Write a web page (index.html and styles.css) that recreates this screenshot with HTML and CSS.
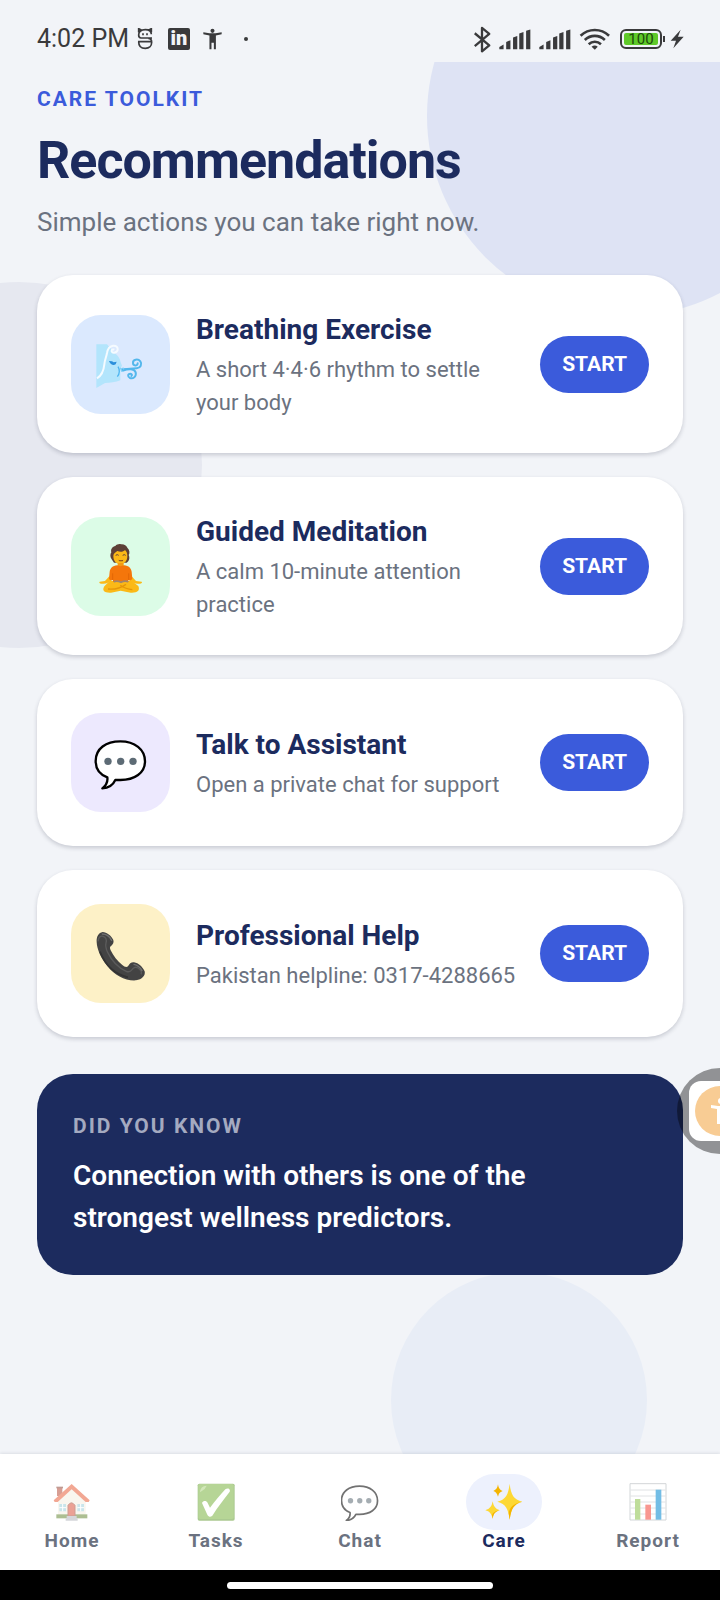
FILE: index.html
```html
<!DOCTYPE html>
<html lang="en">

<head>
    <meta charset="UTF-8">
    <meta name="viewport" content="width=device-width, initial-scale=1.0">
    <title>Recommendations</title>
    <link rel="stylesheet" href="styles.css">
</head>

<body>
    <!-- shared by the assistant card and the chat tab -->
    <svg class="sprite" aria-hidden="true">
        <symbol id="bubble" viewBox="104 112 156 156" overflow="visible">
            <path d="M180 125c43 0 74 24 74 60 0 35-31 56-74 56h-15c-7 15-19 24-39 25 12-9 17-19 15-33-22-8-35-25-35-49 0-37 31-59 74-59z" fill="#fff" stroke="#000" stroke-width="7" stroke-linejoin="round" />
            <g fill="#5d6b75">
                <circle cx="143" cy="185" r="11" />
                <circle cx="181" cy="185" r="11" />
                <circle cx="218" cy="185" r="11" />
            </g>
        </symbol>
    </svg>

    <div class="status">
        <span class="time">4:02 PM</span>
        <svg class="ic-s" viewBox="412 82 48 66" fill="none" stroke="#3a3a3c" stroke-width="5">
            <path d="M457 112H424c-5 0-7-4-7-9 0-11 8-16 20-16s18 5 18 14M415 123h40M417 123c0 13 8 20 20 20s19-8 19-18c0-8-4-12-10-12M417 95V84l8 4M455 95V84l-8 4" />
            <path d="M430 98v6M442 98v6" />
        </svg>
        <span class="linkedin">in</span>
        <svg class="ic-man" viewBox="608 82 56 64" fill="#3a3a3c">
            <circle cx="636" cy="90" r="6" />
            <path d="M609 94l18 3h18l18-3v6l-17 4v40h-6v-19h-7v19h-6v-40l-18-4z" />
        </svg>
        <span class="dot"></span>

        <div class="status-right">
            <svg class="ic-bt" viewBox="336 72 54 82" fill="none" stroke="#3a3a3c" stroke-width="7">
                <path d="M341 94l44 37-22 18V78l22 18-44 37" stroke-linejoin="round" />
            </svg>
            <svg class="ic-signal" viewBox="416 84 98 64" fill="#3a3a3c">
                <path d="M417 146v-7l13-8v15zM438 146v-22l13-6v28zM459 146v-36l13-5v41zM478 146V98l13-5v53zM499 146V89l13-4v61z" />
            </svg>
            <svg class="ic-signal" viewBox="416 84 98 64" fill="#3a3a3c">
                <path d="M417 146v-7l13-8v15zM438 146v-22l13-6v28zM459 146v-36l13-5v41zM478 146V98l13-5v53zM499 146V89l13-4v61z" />
            </svg>
            <svg class="ic-wifi" viewBox="656 80 94 68" fill="none" stroke="#3a3a3c" stroke-width="8">
                <path d="M660 104c25-24 63-24 88 0M673 117c18-17 44-17 62 0M685 130c11-10 27-10 38 0" />
                <path d="M694 138c6-5 13-5 19 0l-9 9z" fill="#3a3a3c" stroke="none" />
            </svg>
            <span class="battery"><span>100</span></span>
            <svg class="ic-bolt" viewBox="930 84 42 60" fill="#3a3a3c">
                <path d="M962 86l-30 33h16l-8 23 31-35h-17z" />
            </svg>
        </div>
    </div>

    <main>
        <div class="blob blob-top"></div>
        <div class="blob blob-left"></div>
        <div class="blob blob-bottom"></div>

        <header>
            <p class="eyebrow">CARE TOOLKIT</p>
            <h1>Recommendations</h1>
            <p class="subtitle">Simple actions you can take right now.</p>
        </header>

        <section class="cards">
            <article class="card">
                <div class="tile blue">
                    <svg viewBox="104 115 156 156" fill="none" aria-hidden="true">
                        <path d="M108 134h32l22 26c12 8 17 17 19 28l4 10-5 8v36c-14 7-31 7-46 8l-26 15z" fill="#b3e5fc" />
                        <path d="M110 236c15-9 20-22 22-42 1-13 6-22 8-34 2-14 8-20 18-22 10-1 15 5 14 12-1 9-15 12-18 5-1-5 3-7 8-5" stroke="#f5fbff" stroke-width="6" />
                        <path d="M146 184c4 11 13 14 20 10l3-8-9 2-5-3z" fill="#2b8fdb" />
                        <path d="M173 201c6 9 5 22-2 30" stroke="#4fb6f0" stroke-width="4" />
                        <path d="M185 209c18-1 30-2 44-3 12-1 17-13 11-21-7-9-23-6-22 5 0 9 14 10 14 1M188 213c18-7 34-6 38 5 3 13-8 20-17 17-8-3-7-13 1-13 5 0 6 5 3 7" stroke="#53b7ec" stroke-width="6" stroke-linecap="round" />
                        <path d="M180 204l5 12M187 204l4 5" stroke="#7fd0f8" stroke-width="4" />
                    </svg>
                </div>
                <div class="info">
                    <h2>Breathing Exercise</h2>
                    <p>A short 4·4·6 rhythm to settle your body</p>
                </div>
                <button type="button">START</button>
            </article>

            <article class="card">
                <div class="tile green">
                    <svg viewBox="104 117 156 156" aria-hidden="true">
                        <path d="M154 175c-5-7-5-15-1-21-3-9 4-18 12-19 4-5 12-7 17-5 9-1 16 3 19 10 7 6 8 16 4 22 4 8 2 19-6 23h-38z" fill="#5d4037" />
                        <path d="M159 165c0-8 7-11 12-15 8 4 18 3 23-3 5 5 7 10 7 18 0 16-9 24-21 24s-21-8-21-24z" fill="#fbb917" />
                        <path d="M166 163q5-4 9 0M187 163q5-4 9 0" fill="none" stroke="#5d4037" stroke-width="3" />
                        <path d="M174 176q8 4 15 0l-2 5h-10z" fill="#7a3c20" />
                        <path d="M172 186h18v12h-18z" fill="#f39a13" />
                        <path d="M147 226l-13 14-16 2c-4 5 5 7 11 6 11 0 20-5 30-15zM214 226l13 14 17 2c4 5-6 7-12 6-11 0-20-5-30-15z" fill="#fbb917" />
                        <path d="M148 240h66l20 15c6 15-4 21-23 20l-30-6-29 6c-20 1-28-6-20-19z" fill="#fbb917" />
                        <path d="M143 264c18 2 35-1 54-14M216 266c-15-1-25-5-36-13" fill="none" stroke="#e59608" stroke-width="4" />
                        <path d="M171 193q10 5 20 0c15 2 21 8 23 19l2 22c-4 5-9 5-12 2v7h-46v-7c-4 3-8 2-12-2l2-22c2-11 8-17 23-19z" fill="#f4760b" />
                        <path d="M157 217v20M205 217v20" stroke="#d95f05" stroke-width="2" />
                        <path d="M160 242q11-4 22 2 10-6 22-2" fill="none" stroke="#a0846e" stroke-width="5" />
                    </svg>
                </div>
                <div class="info">
                    <h2>Guided Meditation</h2>
                    <p>A calm 10-minute attention practice</p>
                </div>
                <button type="button">START</button>
            </article>

            <article class="card">
                <div class="tile purple">
                    <svg aria-hidden="true"><use href="#bubble" /></svg>
                </div>
                <div class="info">
                    <h2>Talk to Assistant</h2>
                    <p>Open a private chat for support</p>
                </div>
                <button type="button">START</button>
            </article>

            <article class="card">
                <div class="tile yellow">
                    <svg viewBox="104 680 156 156" fill="none" aria-hidden="true">
                        <path d="M109 722c-1-17 6-28 18-30 12 0 26 11 32 24 2 7-1 13-6 17-5 3-5 7-2 14 8 17 20 32 35 44 6 5 12 8 17 4 4-8 10-13 18-12 14 2 25 13 32 27 3 13-8 25-26 27-32 2-64-14-86-43-19-24-31-49-32-72z" fill="#434343" />
                        <path d="M113 720c2-12 7-17 15-15 10 3 12 9 9 20-2 8 0 18 5 28 12 25 29 45 56 57 7 3 12 2 17-5 5-8 12-9 18-5 9 6 12 13 9 19" stroke="#5b5b5b" stroke-width="4" />
                        <path d="M126 698c12 0 22 8 28 19M221 789c12 3 19 9 24 19" stroke="#707070" stroke-width="4" stroke-linecap="round" />
                        <path d="M119 751c16 40 43 68 84 77" stroke="#333" stroke-width="5" />
                    </svg>
                </div>
                <div class="info">
                    <h2>Professional Help</h2>
                    <p>Pakistan helpline: 0317-4288665</p>
                </div>
                <button type="button">START</button>
            </article>
        </section>

        <section class="fact">
            <p class="fact-label">DID YOU KNOW</p>
            <p class="fact-text">Connection with others is one of the strongest wellness predictors.</p>
        </section>
    </main>

    <nav>
        <a href="#home">
            <span class="pill">
                <svg viewBox="158 129 114 114" aria-hidden="true">
                    <path d="M170 142h16v26h-16z" fill="#b8503c" />
                    <path d="M168 140h20v5h-20z" fill="#8d4a3c" />
                    <path d="M173 178l41-36 42 36v49h-83z" fill="#f5efe3" />
                    <path d="M168 223h93v12h-93z" fill="#6a8a3a" />
                    <path d="M214 132l54 49-3 5h-9l-42-38-42 38h-9l-3-5z" fill="#e8603c" />
                    <path d="M177 192h20v22h-20zM231 192h20v22h-20z" fill="#9ed0dc" />
                    <path d="M187 192v22M177 203h20M241 192v22M231 203h20" stroke="#fff" stroke-width="3" />
                    <path d="M203 228v-32q10-15 21 0v32z" fill="#dc5540" stroke="#a3503d" stroke-width="3" />
                    <path d="M199 228h30v7h-30zM196 235h36v7h-36z" fill="#b4b6bd" />
                </svg>
            </span>
            Home
        </a>
        <a href="#tasks">
            <span class="pill">
                <svg viewBox="589 129 114 114" aria-hidden="true">
                    <rect x="591" y="131" width="111" height="111" rx="5" fill="#689f38" />
                    <rect x="593" y="132" width="106" height="105" rx="5" fill="#7cb342" />
                    <path d="M598 157q1-19 20-20l-6 10z" fill="#aed581" />
                    <path d="M604 189c4-8 13-8 17 0l7 14c15-20 31-39 46-55 8-7 18 0 12 9-18 23-35 45-50 69-5 7-12 5-16-2z" fill="#fff" />
                </svg>
            </span>
            Tasks
        </a>
        <a href="#chat">
            <span class="pill">
                <svg aria-hidden="true"><use href="#bubble" /></svg>
            </span>
            Chat
        </a>
        <a href="#care" class="active">
            <span class="pill">
                <svg viewBox="374 129 114 114" aria-hidden="true">
                    <path d="M448 131c4 35 12 46 38 54-27 8-33 20-38 54-5-35-11-46-37-54 27-8 32-20 37-54z" fill="#fdd835" />
                    <path d="M486 185c-27 8-33 20-38 54l-3-20c3-16 13-29 41-34z" fill="#f4b400" />
                    <path d="M397 184c3 16 8 22 21 27-14 4-18 10-21 25-4-16-9-21-22-25 14-5 19-11 22-27z" fill="#fdd835" />
                    <path d="M418 211c-14 4-18 10-21 25l-2-10c2-7 9-13 23-15z" fill="#f4b400" />
                    <path d="M413 133c2 12 5 16 14 20-9 3-12 8-14 17-3-10-6-14-14-17 9-4 12-9 14-20z" fill="#f4b400" />
                </svg>
            </span>
            Care
        </a>
        <a href="#report">
            <span class="pill">
                <svg viewBox="806 129 114 114" aria-hidden="true">
                    <path d="M809 131h108v109H809z" fill="#fff" stroke="#b0b6ba" stroke-width="3" />
                    <path d="M810 150h106M810 168h106M810 186h106M810 204h106M810 222h106" stroke="#c8ccd0" stroke-width="3" />
                    <path d="M824 177h16v62h-16z" fill="#8bc34a" />
                    <path d="M855 194h17v45h-17z" fill="#f44336" />
                    <path d="M886 149h17v90h-17z" fill="#0288d1" />
                </svg>
            </span>
            Report
        </a>
    </nav>

    <div class="gesture-bar"><span></span></div>

    <button type="button" class="floating" aria-label="Accessibility">
        <span>
            <svg viewBox="0 0 50 50" aria-hidden="true">
                <circle cx="25" cy="25" r="25" fill="#f8cc94" />
                <g fill="#fff">
                    <circle cx="26" cy="15" r="3" />
                    <path d="M16 19l7 1h6l7-1v3l-7 1v15h-2v-8h-2v8h-3V23l-6-1z" />
                </g>
            </svg>
        </span>
    </button>
</body>

</html>
```

FILE: styles.css
```css
* {
    margin: 0;
    padding: 0;
    box-sizing: border-box;
    font-family: Roboto, "Liberation Sans", sans-serif;
}

body {
    min-height: 100vh;
    display: flex;
    flex-direction: column;
    background-color: #f2f4f8;
    overflow-x: hidden;
}

svg {
    display: block;
    flex: none;
}

.sprite {
    position: absolute;
    width: 0;
    height: 0;
}

/* status bar */
.status {
    height: 62px;
    padding: 16px 36px 0 37px;
    display: flex;
    align-items: center;
    color: #3a3a3c;
}

.time {
    font-size: 25px;
    line-height: 30px;
    margin-right: 8px;
}

.ic-s {
    width: 16px;
    height: 22px;
    margin-right: 15px;
}

.linkedin {
    width: 22px;
    height: 22px;
    border-radius: 2px;
    background-color: #3a3a3c;
    color: #f2f4f8;
    font-size: 20px;
    font-weight: 900;
    line-height: 21px;
    text-align: center;
}

.ic-man {
    width: 19px;
    height: 22px;
    margin-left: 13px;
}

.dot {
    width: 4px;
    height: 4px;
    margin-left: 22px;
    border-radius: 50%;
    background-color: #3a3a3c;
}

.status-right {
    margin-left: auto;
    display: flex;
    align-items: center;
    gap: 8px;
}

.ic-bt {
    width: 18px;
    height: 27px;
}

.ic-signal {
    width: 32px;
    height: 21px;
}

.ic-wifi {
    width: 31px;
    height: 22px;
}

.battery {
    position: relative;
    width: 42px;
    height: 20px;
    margin-left: 2px;
    padding: 2px;
    border: 2px solid #3a3a3c;
    border-radius: 6px;
}

.battery span {
    display: block;
    height: 12px;
    border-radius: 2px;
    background-color: #5fc929;
    color: #1d4a0c;
    font-size: 15px;
    line-height: 12px;
    text-align: center;
}

.battery::after {
    content: "";
    position: absolute;
    top: 5px;
    right: -5px;
    width: 2px;
    height: 6px;
    background-color: #3a3a3c;
}

.ic-bolt {
    width: 14px;
    height: 20px;
}

/* page */
main {
    position: relative;
    flex: 1;
    padding: 23px 37px;
    overflow: hidden;
}

header,
.cards,
.fact {
    position: relative;
}

.blob {
    position: absolute;
    border-radius: 50%;
}

.blob-top {
    width: 400px;
    height: 400px;
    top: -146px;
    right: -107px;
    background-color: #dee3f4;
}

.blob-left {
    width: 366px;
    height: 366px;
    top: 220px;
    left: -164px;
    background-color: #e6e8f0;
}

.blob-bottom {
    width: 256px;
    height: 256px;
    right: 73px;
    bottom: -74px;
    background-color: #e8edf6;
}

.eyebrow {
    color: #3b5bdb;
    font-size: 21px;
    font-weight: 700;
    line-height: 28px;
    letter-spacing: 2px;
}

h1 {
    margin-top: 16px;
    color: #1c2b5e;
    font-size: 52px;
    font-weight: 700;
    line-height: 64px;
    letter-spacing: -1px;
}

.subtitle {
    margin: 11px 0 35px;
    color: #6b7280;
    font-size: 26px;
    line-height: 36px;
}

.cards {
    display: flex;
    flex-direction: column;
    gap: 24px;
}

.card {
    display: flex;
    align-items: center;
    padding: 34px;
    border-radius: 36px;
    background-color: #fff;
    box-shadow: 0 2px 4px rgba(28, 35, 60, 0.2);
}

.tile {
    flex: none;
    width: 99px;
    height: 99px;
    margin-right: 26px;
    border-radius: 30px;
    display: flex;
    justify-content: center;
    align-items: center;
}

.tile svg {
    width: 52px;
    height: 52px;
    overflow: visible;
}

.blue {
    background-color: #dbe9fe;
}

.green {
    background-color: #dcfce7;
}

.purple {
    background-color: #ede9fe;
}

.yellow {
    background-color: #fdf1c7;
}

.info {
    flex: 1;
    min-width: 0;
    margin-right: 20px;
}

h2 {
    margin-bottom: 2px;
    color: #1c2b5e;
    font-size: 28px;
    font-weight: 700;
    line-height: 42px;
}

.info p {
    color: #6b7280;
    font-size: 22px;
    line-height: 33px;
}

.card button {
    flex: none;
    padding: 14px 22px;
    border: none;
    border-radius: 29px;
    background-color: #3b5bdb;
    color: #fff;
    font-size: 21px;
    font-weight: 700;
    line-height: 29px;
}

.fact {
    margin-top: 37px;
    padding: 36px;
    border-radius: 36px;
    background-color: #1c2b5e;
}

.fact-label {
    margin-bottom: 13px;
    color: #a4aac0;
    font-size: 21px;
    font-weight: 700;
    line-height: 32px;
    letter-spacing: 2px;
}

.fact-text {
    max-width: 500px;
    color: #fff;
    font-size: 28px;
    font-weight: 600;
    line-height: 42px;
}

/* bottom tabs */
nav {
    position: relative;
    display: flex;
    padding: 20px 0 18px;
    background-color: #fff;
    box-shadow: 0 -1px 3px rgba(28, 35, 60, 0.1);
}

nav a {
    flex: 1;
    display: flex;
    flex-direction: column;
    align-items: center;
    color: #6b7280;
    font-size: 19px;
    font-weight: 700;
    line-height: 22px;
    letter-spacing: 1px;
    text-decoration: none;
}

.pill {
    width: 76px;
    height: 56px;
    border-radius: 28px;
    display: flex;
    justify-content: center;
    align-items: center;
}

.pill svg {
    width: 38px;
    height: 38px;
    opacity: 0.55;
}

.active {
    color: #1c2b5e;
}

.active .pill {
    background-color: #edf1fd;
}

.active .pill svg {
    opacity: 1;
}

.gesture-bar {
    height: 30px;
    display: flex;
    justify-content: center;
    align-items: center;
    background-color: #000;
}

.gesture-bar span {
    width: 37%;
    height: 7px;
    border-radius: 4px;
    background-color: #fff;
}

.floating {
    position: fixed;
    top: 1068px;
    right: -43px;
    width: 86px;
    height: 86px;
    padding: 13px 12px;
    border: none;
    border-radius: 50%;
    background-color: rgba(0, 0, 0, 0.4);
}

.floating span {
    height: 60px;
    border-radius: 12px;
    display: flex;
    justify-content: center;
    align-items: center;
    background-color: #fff;
}

.floating svg {
    width: 50px;
    height: 50px;
}
```
